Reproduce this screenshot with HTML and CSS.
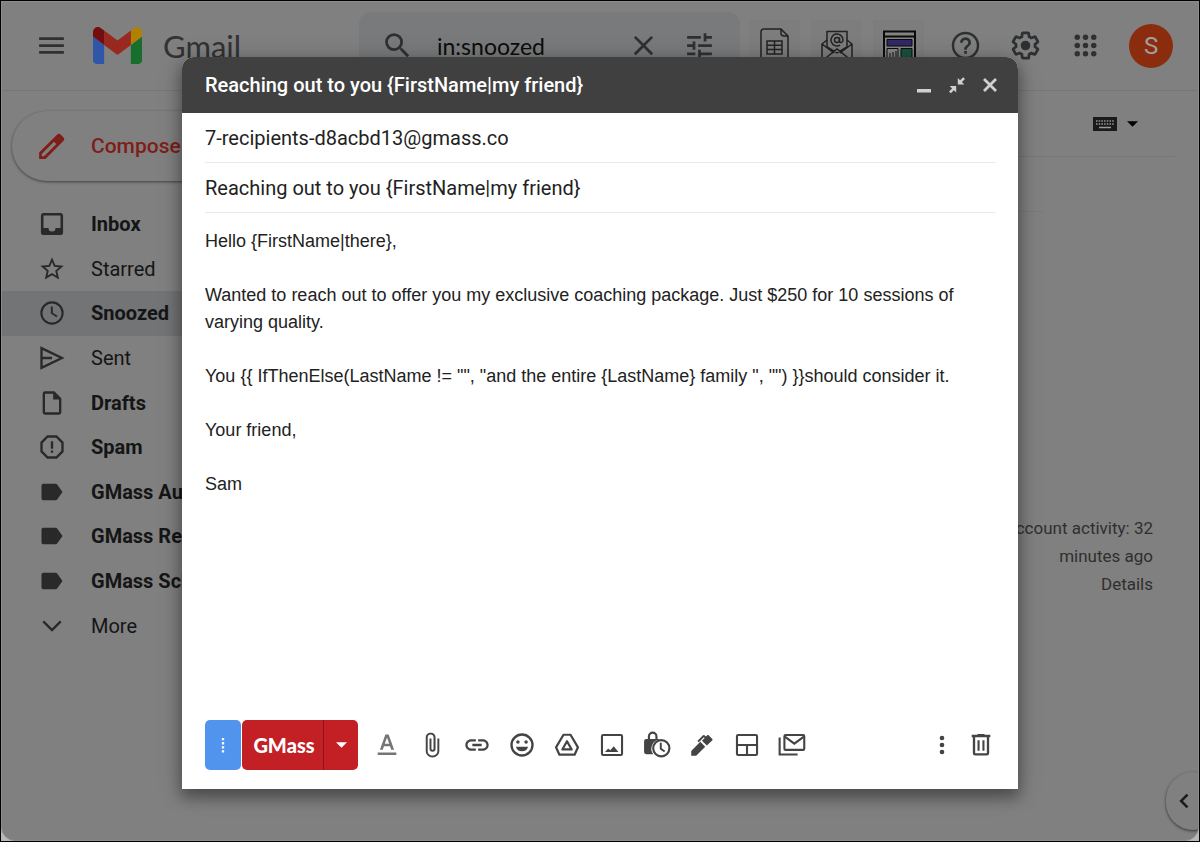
FILE: index.html
```html
<!DOCTYPE html>
<html lang="en">
<head>
  <meta charset="UTF-8">
  <meta name="viewport" content="width=device-width, initial-scale=1.0">
  <title>Gmail</title>
  <link rel="stylesheet" href="styles.css">
</head>
<body>
  <div class="window">
    <!-- Top bar -->
    <header class="topbar">
      <div class="brand">
        <button class="icon-btn" aria-label="Main menu">
          <svg class="icon-lg" viewBox="0 0 24 24"><path d="M3 18h18v-2H3v2zm0-5h18v-2H3v2zm0-7v2h18V6H3z"/></svg>
        </button>
        <a class="logo" href="#">
          <svg class="logo-mark" viewBox="52 42 88 66">
            <path fill="#3056a8" d="M58 108h14V74L52 59v43c0 3.32 2.69 6 6 6"/>
            <path fill="#176e2d" d="M120 108h14c3.32 0 6-2.69 6-6V59l-20 15"/>
            <path fill="#b08000" d="M120 48v26l20-15v-8c0-7.42-8.47-11.65-14.4-7.2"/>
            <path fill="#99281f" d="M72 74V48l24 18 24-18v26L96 92"/>
            <path fill="#740d0d" d="M52 51v8l20 15V48l-5.6-4.2c-5.94-4.45-14.4-.22-14.4 7.2"/>
          </svg>
          <span>Gmail</span>
        </a>
      </div>
      <form class="search">
        <button class="icon-btn" type="button" aria-label="Search">
          <svg class="icon-lg" viewBox="0 0 24 24"><path d="M15.5 14h-.79l-.28-.27A6.47 6.47 0 0 0 16 9.5 6.5 6.5 0 1 0 9.5 16c1.61 0 3.09-.59 4.23-1.57l.27.28v.79l5 4.99L20.49 19l-4.99-5zm-6 0a4.5 4.5 0 1 1 0-9 4.5 4.5 0 0 1 0 9z"/></svg>
        </button>
        <input class="search-input" type="text" value="in:snoozed" aria-label="Search mail">
        <button class="icon-btn" type="button" aria-label="Clear search">
          <svg class="icon-lg" viewBox="0 0 24 24"><path d="M19 6.400L17.600 5 12 10.600 6.400 5 5 6.400 10.600 12 5 17.600 6.400 19 12 13.400 17.600 19 19 17.600 13.400 12z"/></svg>
        </button>
        <button class="icon-btn" type="button" aria-label="Search options">
          <svg class="icon-lg" viewBox="0 0 24 24"><path d="M3 17v2h6v-2H3zM3 5v2h10V5H3zm10 16v-2h8v-2h-8v-2h-2v6h2zM7 9v2H3v2h4v2h2V9H7zm14 4v-2H11v2h10zm-6-4h2V7h4V5h-4V3h-2v6z"/></svg>
        </button>
      </form>
      <div class="extensions">
        <button class="ext-btn" aria-label="Google Sheets">
          <svg class="ext-icon" viewBox="0 0 36 36" fill="none" stroke="#222" stroke-width="1.500">
            <path d="M24 1H7a3 3 0 0 0-3 3v28a3 3 0 0 0 3 3h21a3 3 0 0 0 3-3V8z M24 1v4a3 3 0 0 0 3 3h4"/>
            <path d="M10 13h15v13H10z M10 17.300h15 M10 21.600h15 M17.500 13v13"/>
          </svg>
        </button>
        <button class="ext-btn" aria-label="Email campaigns">
          <svg class="ext-icon" viewBox="0 0 36 36" fill="none" stroke="#222" stroke-width="1.500">
            <path d="M8 19V3.500h20V19"/>
            <path d="M8 12l-5 4v17h30V16l-5-4 M3 16l12 9 M33 16l-12 9 M3 33l15-12 15 12 M8 19l10 6 10-6"/>
            <circle cx="18" cy="12" r="2.500"/>
            <path d="M20.500 9.500v3.500c0 2.500 3.500 2 3.500-1a6 6 0 1 0-3 5.200"/>
          </svg>
        </button>
        <button class="ext-btn" aria-label="Reports">
          <svg class="ext-icon" viewBox="0 0 36 36">
            <rect x="3" y="3.500" width="31" height="31" fill="#858585" stroke="#0b0b0b" stroke-width="2"/>
            <path d="M3 8.500h31" stroke="#0b0b0b" stroke-width="2"/>
            <path d="M6 11.500h25v6.500H6z" fill="#322866" stroke="#0b0b0b"/>
            <path d="M6 20.500h11V33H6z" fill="#858585" stroke="#0b0b0b"/>
            <path d="M20 20.500h11V33H20z" fill="#18523f" stroke="#0b0b0b"/>
            <path d="M9 25v5m3-6v6m3-7v7" stroke="#0b0b0b"/>
          </svg>
        </button>
      </div>
      <div class="account">
        <button class="icon-btn" aria-label="Support">
          <svg class="icon-lg" viewBox="0 0 24 24"><path d="M11 18h2v-2h-2v2zm1-16a10 10 0 1 0 0 20 10 10 0 0 0 0-20zm0 18.200a8.200 8.200 0 1 1 0-16.400 8.200 8.200 0 0 1 0 16.400zM12 6a4 4 0 0 0-4 4h2a2 2 0 1 1 4 0c0 2-3 1.750-3 5h2c0-2.250 3-2.500 3-5a4 4 0 0 0-4-4z"/></svg>
        </button>
        <button class="icon-btn" aria-label="Settings">
          <svg class="icon-lg" viewBox="0 0 24 24"><path d="M13.85 22.25h-3.7c-.74 0-1.36-.54-1.45-1.27l-.27-1.89c-.27-.14-.53-.29-.79-.46l-1.8.72c-.7.26-1.47-.03-1.81-.65L2.2 15.53c-.35-.66-.2-1.44.36-1.88l1.53-1.19c-.01-.15-.02-.3-.02-.46 0-.15.01-.31.02-.46l-1.52-1.19c-.59-.45-.74-1.26-.37-1.88l1.85-3.19c.34-.62 1.11-.9 1.79-.63l1.81.73c.26-.17.52-.32.78-.46l.27-1.91c.09-.7.71-1.25 1.44-1.25h3.7c.74 0 1.36.54 1.45 1.27l.27 1.89c.27.14.53.29.79.46l1.8-.72c.71-.26 1.48.03 1.82.65l1.84 3.18c.36.66.2 1.44-.36 1.88l-1.52 1.19c.01.15.02.3.02.46s-.01.31-.02.46l1.52 1.19c.56.45.72 1.23.37 1.86l-1.86 3.22c-.34.62-1.11.9-1.8.63l-1.8-.72c-.26.17-.52.32-.78.46l-.27 1.91c-.1.68-.72 1.22-1.46 1.22zm-3.23-2h2.76l.37-2.55.53-.22c.44-.18.88-.44 1.34-.78l.45-.34 2.38.96 1.38-2.4-2.03-1.58.07-.56c.03-.26.06-.51.06-.78s-.03-.53-.06-.78l-.07-.56 2.03-1.58-1.39-2.4-2.39.96-.45-.35c-.42-.32-.87-.58-1.33-.77l-.52-.22-.37-2.55h-2.76l-.37 2.55-.53.21c-.44.19-.88.44-1.34.79l-.45.33-2.38-.95-1.39 2.39 2.03 1.58-.07.56a7 7 0 0 0-.06.79c0 .26.02.53.06.78l.07.56-2.03 1.58 1.38 2.4 2.39-.96.45.35c.43.33.86.58 1.33.77l.53.22.38 2.55z"/><circle cx="12" cy="12" r="3.500"/></svg>
        </button>
        <button class="icon-btn" aria-label="Google apps">
          <svg class="icon-lg" viewBox="0 0 24 24"><circle cx="6" cy="6" r="2"/><circle cx="12" cy="6" r="2"/><circle cx="18" cy="6" r="2"/><circle cx="6" cy="12" r="2"/><circle cx="12" cy="12" r="2"/><circle cx="18" cy="12" r="2"/><circle cx="6" cy="18" r="2"/><circle cx="12" cy="18" r="2"/><circle cx="18" cy="18" r="2"/></svg>
        </button>
        <button class="avatar" aria-label="Google account">S</button>
      </div>
    </header>

    <div class="content">
      <!-- Sidebar -->
      <aside class="sidebar">
        <button class="compose-btn">
          <svg class="icon-lg" viewBox="0 0 24 24"><path fill-rule="evenodd" d="M3 16.400V21h4.600L20.600 8a2 2 0 0 0 0-2.800l-1.800-1.800a2 2 0 0 0-2.800 0zM6.600 19.100H4.900v-1.700L13.800 8.500l1.700 1.700z"/></svg>
          Compose
        </button>
        <nav class="folders">
          <a class="folder bold" href="#">
            <svg class="icon" viewBox="0 0 24 24"><path d="M19 2.500H5A2.500 2.500 0 0 0 2.500 5v14A2.500 2.500 0 0 0 5 21.500h14a2.500 2.500 0 0 0 2.500-2.500V5A2.500 2.500 0 0 0 19 2.500zm.3 13H15a3 3 0 0 1-6 0H4.700V4.700h14.600z"/></svg>
            Inbox
          </a>
          <a class="folder" href="#">
            <svg class="icon" viewBox="0 0 24 24"><path d="M22 9.240l-7.190-.62L12 2 9.190 8.630 2 9.240l5.460 4.730L5.820 21 12 17.270 18.180 21l-1.630-7.030L22 9.240zM12 15.400l-3.760 2.270 1-4.280-3.320-2.880 4.380-.38L12 6.100l1.710 4.040 4.380.38-3.320 2.880 1 4.280L12 15.400z"/></svg>
            Starred
          </a>
          <a class="folder bold active" href="#">
            <svg class="icon" viewBox="0 0 24 24"><path d="M12 2a10 10 0 1 0 0 20 10 10 0 0 0 0-20zm0 18.200a8.200 8.200 0 1 1 0-16.400 8.200 8.200 0 0 1 0 16.400zM12.700 6.500H11v6l4.800 3.200.9-1.400-4-2.600z"/></svg>
            Snoozed
          </a>
          <a class="folder" href="#">
            <svg class="icon" viewBox="0 0 24 24" fill="none" stroke="#292929" stroke-width="2"><path d="M3 3.500L20.500 12 3 20.500z M3 12h9"/></svg>
            Sent
          </a>
          <a class="folder bold" href="#">
            <svg class="icon" viewBox="0 0 24 24"><path d="M14 2H6a2 2 0 0 0-2 2v16a2 2 0 0 0 2 2h12a2 2 0 0 0 2-2V8zm4 18H6V4h7v5h5z"/></svg>
            Drafts
          </a>
          <a class="folder bold" href="#">
            <svg class="icon" viewBox="0 0 24 24" fill="none" stroke="#292929" stroke-width="2"><path d="M8.200 3h7.600L21 8.200v7.600L15.800 21H8.200L3 15.800V8.200z M12 7v6.500 M12 15v2"/></svg>
            Spam
          </a>
          <a class="folder bold" href="#">
            <svg class="icon" viewBox="0 0 24 24"><path d="M16.600 5.800c-.4-.5-1-.8-1.600-.8H4.500a1.500 1.500 0 0 0-1.500 1.500v11A1.500 1.500 0 0 0 4.500 19H15c.7 0 1.300-.3 1.600-.8L21 12z"/></svg>
            GMass Auto
          </a>
          <a class="folder bold" href="#">
            <svg class="icon" viewBox="0 0 24 24"><path d="M16.600 5.800c-.4-.5-1-.8-1.600-.8H4.500a1.500 1.500 0 0 0-1.500 1.500v11A1.500 1.500 0 0 0 4.500 19H15c.7 0 1.300-.3 1.600-.8L21 12z"/></svg>
            GMass Reports
          </a>
          <a class="folder bold" href="#">
            <svg class="icon" viewBox="0 0 24 24"><path d="M16.600 5.800c-.4-.5-1-.8-1.600-.8H4.500a1.500 1.500 0 0 0-1.500 1.500v11A1.500 1.500 0 0 0 4.500 19H15c.7 0 1.300-.3 1.600-.8L21 12z"/></svg>
            GMass Scheduled
          </a>
          <a class="folder" href="#">
            <svg class="icon" viewBox="0 0 24 24" fill="none" stroke="#292929" stroke-width="2"><path d="M4.500 8l7.500 7.500L19.500 8"/></svg>
            More
          </a>
        </nav>
      </aside>

      <!-- Mail list area -->
      <main class="mail">
        <div class="mail-toolbar">
          <button class="input-tools" aria-label="Input tools">
            <svg class="keyboard" viewBox="0 0 24 14">
              <path d="M0 0h24v14H0z"/>
              <path d="M3 4h18 M3 7h18" stroke="#999" stroke-width="1.500" stroke-dasharray="1.500 1.200"/>
              <path d="M6 10.500h12" stroke="#999" stroke-width="1.300"/>
            </svg>
            <svg class="caret" viewBox="0 0 12 6"><path d="M0 0h12L6 6z"/></svg>
          </button>
        </div>
        <div class="mail-tabs"></div>
        <footer class="activity">
          <p>Last account activity: 32<br>minutes ago</p>
          <a href="#">Details</a>
        </footer>
      </main>
    </div>

    <button class="side-panel" aria-label="Show side panel">
      <svg class="icon" viewBox="0 0 24 24" fill="none" stroke="#1c1c1c" stroke-width="2.200"><path d="M15 6.500L9.500 12l5.500 5.500"/></svg>
    </button>

    <!-- Compose dialog -->
    <div class="overlay">
      <section class="dialog" role="dialog" aria-labelledby="dialog-title">
        <div class="dialog-header">
          <h2 id="dialog-title">Reaching out to you {FirstName|my friend}</h2>
          <button class="header-btn" aria-label="Minimize">
            <svg class="icon-sm" viewBox="0 0 20 20"><path d="M3 14h14v3.500H3z"/></svg>
          </button>
          <button class="header-btn" aria-label="Exit full screen">
            <svg class="icon-sm" viewBox="0 0 20 20"><path d="M10.800 3v6.500h6.500l-2.400-2.400L18 4 16.200 2.200l-3.100 3.100zM9.200 17.500V11H2.700l2.400 2.400L2 16.500l1.800 1.800 3.100-3.100z"/></svg>
          </button>
          <button class="header-btn" aria-label="Close">
            <svg class="icon-sm" viewBox="0 0 20 20" fill="none" stroke="#d0d0d0" stroke-width="2.800"><path d="M4 4l12 12M16 4L4 16"/></svg>
          </button>
        </div>
        <div class="fields">
          <input class="field" type="text" value="7-recipients-d8acbd13@gmass.co" aria-label="To">
          <input class="field" type="text" value="Reaching out to you {FirstName|my friend}" aria-label="Subject">
          <textarea class="message" aria-label="Message body">Hello {FirstName|there},

Wanted to reach out to offer you my exclusive coaching package. Just $250 for 10 sessions of varying quality.

You {{ IfThenElse(LastName != "", "and the entire {LastName} family ", "") }}should consider it.

Your friend,

Sam</textarea>
        </div>
        <div class="dialog-footer">
          <button class="gmass-settings" aria-label="GMass settings">
            <svg class="icon" viewBox="0 0 24 24"><path d="M11 6h2v2h-2zM11 9.500h2v2h-2zM11 13h2v2h-2zM11 16.500h2v2h-2z"/></svg>
          </button>
          <div class="gmass">
            <button class="gmass-send">GMass</button>
            <button class="gmass-more" aria-label="More send options">
              <svg class="caret" viewBox="0 0 12 6"><path d="M0 0h12L6 6z"/></svg>
            </button>
          </div>
          <div class="tools">
            <button class="tool" aria-label="Formatting options">
              <svg class="icon" viewBox="0 0 24 24"><path class="muted" d="M4 18.500h16v2H4zM10.600 3L5.900 16h2.500l1-2.900h5.200l1 2.900h2.500L13.400 3zm-.5 8L12 5.600l1.900 5.400z"/></svg>
            </button>
            <button class="tool" aria-label="Attach files">
              <svg class="icon" viewBox="-1 -1 26 26"><path d="M17 6v11.500c0 2.500-2 4.300-4.500 4.300S8 20 8 17.500V5a2.700 2.700 0 0 1 5.400 0v10.500c0 .55-.4 1-.9 1s-1-.45-1-1V6H9.700v9.500a2.800 2.800 0 0 0 5.600 0V5c0-2.500-1.900-4.400-4.500-4.400S6.200 2.500 6.200 5v12.500c0 3.300 2.800 6 6.300 6s6.300-2.700 6.300-6V6z"/></svg>
            </button>
            <button class="tool" aria-label="Insert link">
              <svg class="icon" viewBox="0 0 24 24"><path d="M3.900 12c0-1.710 1.390-3.100 3.100-3.100h4V7H7c-2.760 0-5 2.240-5 5s2.240 5 5 5h4v-1.900H7c-1.710 0-3.100-1.390-3.100-3.100zM8 13h8v-2H8v2zm9-6h-4v1.900h4c1.710 0 3.100 1.390 3.100 3.100s-1.390 3.100-3.100 3.100h-4V17h4c2.760 0 5-2.240 5-5s-2.240-5-5-5z"/></svg>
            </button>
            <button class="tool" aria-label="Insert emoji">
              <svg class="icon" viewBox="0 0 24 24"><circle cx="12" cy="12" r="9" fill="none" stroke="#444" stroke-width="2"/><circle cx="8.500" cy="9.500" r="1.500"/><circle cx="15.500" cy="9.500" r="1.500"/><path d="M6.800 13.500h10.400a5.400 5.400 0 0 1-10.400 0z"/></svg>
            </button>
            <button class="tool" aria-label="Insert from Drive">
              <svg class="icon" viewBox="0 0 24 24" fill="none" stroke="#444" stroke-width="1.900" stroke-linejoin="round"><path d="M9 3.200h6l6.400 10.800-2.900 6.300h-13L2.600 14z"/><path d="M12 8.800l4 7H8z"/></svg>
            </button>
            <button class="tool" aria-label="Insert photo">
              <svg class="icon" viewBox="0 0 24 24"><rect x="3.400" y="3.400" width="17.200" height="17.200" rx="1" fill="none" stroke="#444" stroke-width="1.800"/><path d="M6 18l2.700-3 1.800 1.500 3-3.500 4 5z"/></svg>
            </button>
            <button class="tool" aria-label="Toggle confidential mode">
              <svg class="icon" viewBox="0 0 26 26"><path fill-rule="evenodd" d="M3 7.500h1.500V5a4.500 4.500 0 0 1 9 0v2.500H15a1.500 1.500 0 0 1 .9.400A8.500 8.500 0 0 0 9.500 21.500H3a2 2 0 0 1-2-2v-10a2 2 0 0 1 2-2zm3.500 0h5V5a2.500 2.500 0 0 0-5 0z"/><circle cx="17" cy="16" r="7.500" fill="none" stroke="#444" stroke-width="2"/><path d="M16.500 11v5.500l3.600 2.500" fill="none" stroke="#444" stroke-width="1.800"/></svg>
            </button>
            <button class="tool" aria-label="Insert signature">
              <svg class="icon" viewBox="-1 -1 26 26"><path d="M2 17.500L10.400 9l4.600 4.600L6.600 22H2zM12 8l2.500-2.500-.8-.7L9 9.500 7.700 8.200l5-5a1.500 1.500 0 0 1 2 0l1 1 1-1c.5-.5 1.200-.5 1.700 0l3 3c.5.5.5 1.200 0 1.700L16.500 12.500z"/></svg>
            </button>
            <button class="tool" aria-label="Select a layout">
              <svg class="icon" viewBox="0 0 24 24" fill="none" stroke="#444" stroke-width="1.800"><rect x="3.400" y="3.400" width="17.200" height="17.200" rx="1"/><path d="M3.400 12h17.200 M12 12v8.600"/></svg>
            </button>
            <button class="tool" aria-label="Mail merge">
              <svg class="icon" viewBox="0 0 24 24" fill="none" stroke="#444" stroke-width="1.800"><rect x="5.500" y="3.400" width="17" height="12.800" rx="1"/><path d="M5.800 4.800l8.200 6 8.200-6 M1.400 5.500v14.700h15.400"/></svg>
            </button>
          </div>
          <button class="foot-btn" aria-label="More options">
            <svg class="icon" viewBox="0 0 24 24"><circle cx="12" cy="6" r="2"/><circle cx="12" cy="12" r="2"/><circle cx="12" cy="18" r="2"/></svg>
          </button>
          <button class="foot-btn" aria-label="Discard draft">
            <svg class="icon" viewBox="0 0 24 24"><path d="M15 3.300V2.500H9v.8H4v2h1V19a2 2 0 0 0 2 2h10a2 2 0 0 0 2-2V5.300h1v-2zm2 15.700H7V5.300h10zM9 8h1.800v9H9zm4.200 0H15v9h-1.800z"/></svg>
          </button>
        </div>
      </section>
    </div>
  </div>
</body>
</html>
```
FILE: styles.css
```css
* {
  box-sizing: border-box;
}

body {
  margin: 0;
  background: #b8b8b8;
  border: 1px solid #000;
  min-height: 100vh;
  display: flex;
  font-family: Roboto, Arial, sans-serif;
  color: #151515;
}

button {
  display: flex;
  align-items: center;
  justify-content: center;
  padding: 0;
  border: none;
  background: none;
  font-family: inherit;
  cursor: pointer;
}

input,
textarea {
  border: none;
  outline: none;
  background: none;
  padding: 0;
}

a {
  color: inherit;
  text-decoration: none;
}

.window {
  flex: 1;
  min-width: 0;
  position: relative;
  display: flex;
  flex-direction: column;
  overflow: hidden;
  background: #808080;
  border: 1px solid #8c8c8c;
  border-radius: 0 0 14px 14px;
}

.icon-lg {
  width: 33px;
  height: 33px;
  fill: #2e3032;
}

.icon {
  width: 28px;
  height: 28px;
}

.icon-sm {
  width: 20px;
  height: 20px;
}

/* Top bar */
.topbar {
  display: flex;
  align-items: center;
  height: 89px;
  padding: 0 25px 1px 0;
  border-bottom: 1px solid #767676;
}

.brand {
  display: flex;
  align-items: center;
  gap: 25px;
  width: 357px;
  padding-left: 33px;
}

.logo {
  display: flex;
  align-items: center;
  gap: 21px;
  font-family: Lato, sans-serif;
  font-size: 31px;
  color: #303234;
}

.logo-mark {
  width: 49px;
  height: 37px;
}

.search {
  flex: 1;
  min-width: 0;
  display: flex;
  align-items: center;
  gap: 23px;
  height: 68px;
  padding: 0 24px 0 22px;
  border-radius: 12px;
  background: #787a7b;
}

.search-input {
  flex: 1;
  min-width: 0;
  font-family: Lato, sans-serif;
  font-size: 23px;
  color: #0c0c0c;
}

.extensions {
  display: flex;
  gap: 11px;
  margin: 0 25px 0 9px;
}

.ext-btn {
  width: 51px;
  height: 51px;
  background: #7d7d7d;
}

.ext-icon {
  width: 36px;
  height: 36px;
}

.account {
  display: flex;
  align-items: center;
  gap: 27px;
}

.avatar {
  width: 44px;
  height: 44px;
  border-radius: 50%;
  background: #8c2c0e;
  color: #a0a0a0;
  font-size: 24px;
}

/* Sidebar */
.content {
  flex: 1;
  display: flex;
}

.sidebar {
  width: 260px;
  padding-top: 20px;
}

.compose-btn {
  gap: 23px;
  width: 210px;
  height: 70px;
  margin-left: 10px;
  padding-left: 23px;
  justify-content: flex-start;
  border-radius: 35px;
  background: #808080;
  box-shadow: 0 1px 3px rgba(0, 0, 0, 0.5);
  font-size: 21px;
  font-weight: 500;
  color: #7e1e18;
}

.compose-btn .icon-lg {
  fill: #7e1e18;
}

.folders {
  display: grid;
  grid-auto-rows: 1fr;
  min-height: 446px;
  margin-top: 21px;
}

.folder {
  display: flex;
  align-items: center;
  gap: 25px;
  padding-left: 36px;
  font-size: 20px;
  white-space: nowrap;
}

.folder .icon {
  fill: #292929;
}

.folder .icon[fill="none"] {
  fill: none;
}

.bold {
  font-weight: bold;
}

.active {
  background: #727475;
}

/* Mail area */
.mail {
  flex: 1;
  display: flex;
  flex-direction: column;
}

.mail-toolbar {
  display: flex;
  align-items: center;
  justify-content: flex-end;
  height: 66px;
  margin-right: 23px;
  padding-right: 37px;
  border-bottom: 1px solid #777;
}

.mail-tabs {
  height: 55px;
  margin-right: 155px;
  border-bottom: 1px solid #7a7a7a;
}

.input-tools {
  gap: 10px;
}

.keyboard {
  width: 24px;
  height: 14px;
  fill: #1a1a1a;
}

.caret {
  width: 11px;
  height: 6px;
}

.activity {
  margin: 302px 45px 0 0;
  text-align: right;
  font-size: 17px;
  line-height: 28px;
  color: #2f2f2f;
}

.activity p {
  margin: 0;
}

.side-panel {
  position: absolute;
  right: -22px;
  bottom: 10px;
  width: 54px;
  height: 58px;
  padding-right: 18px;
  border-radius: 29px;
  background: #808080;
  box-shadow: 0 1px 3px rgba(0, 0, 0, 0.6);
}

/* Compose dialog */
.overlay {
  position: absolute;
  inset: 0;
  display: flex;
  padding: 55px 180px 51px;
}

.dialog {
  flex: 1;
  min-width: 0;
  display: flex;
  flex-direction: column;
  border-radius: 12px 12px 0 0;
  background: #fff;
  box-shadow: 0 8px 14px 1px rgba(0, 0, 0, 0.3), 0 3px 24px 2px rgba(0, 0, 0, 0.2);
}

.dialog-header {
  display: flex;
  align-items: center;
  gap: 13px;
  height: 56px;
  padding: 0 18px 0 23px;
  border-radius: 12px 12px 0 0;
  background: #404040;
}

.dialog-header h2 {
  flex: 1;
  margin: 0;
  font-size: 20px;
  font-weight: 500;
  color: #fff;
}

.header-btn .icon-sm {
  fill: #d0d0d0;
}

.header-btn .icon-sm[fill="none"] {
  fill: none;
}

.fields {
  flex: 1;
  display: flex;
  flex-direction: column;
  padding: 0 22px 0 23px;
}

.field {
  height: 50px;
  border-bottom: 1px solid #e8eaeb;
  font-family: Roboto, Arial, sans-serif;
  font-size: 20px;
  color: #222;
}

.message {
  flex: 1;
  padding: 15px 0 0;
  resize: none;
  font-family: "Liberation Sans", Arial, sans-serif;
  font-size: 18px;
  line-height: 27px;
  color: #222;
}

.dialog-footer {
  display: flex;
  align-items: center;
  padding: 20px 18px 19px 23px;
}

.gmass-settings {
  width: 36px;
  height: 50px;
  margin-right: 1px;
  border-radius: 5px;
  background: #5094ed;
}

.gmass-settings .icon {
  fill: #fff;
}

.gmass {
  display: flex;
  height: 50px;
  border-radius: 5px;
  background: #c32026;
}

.gmass-send {
  width: 82px;
  padding-left: 3px;
  border-right: 1px solid #8c1519;
  font-family: Lato, sans-serif;
  font-size: 20px;
  font-weight: 900;
  color: #fff;
}

.gmass-more {
  width: 34px;
}

.gmass-more .caret {
  fill: #fff;
}

.tools {
  flex: 1;
  display: flex;
  margin-left: 6px;
}

.tool {
  width: 45px;
  height: 50px;
}

.tool .icon,
.foot-btn .icon {
  fill: #444;
}

.tool .icon[fill="none"] {
  fill: none;
}

.tool .muted {
  fill: #757575;
}

.foot-btn {
  width: 39px;
  height: 50px;
}
```
